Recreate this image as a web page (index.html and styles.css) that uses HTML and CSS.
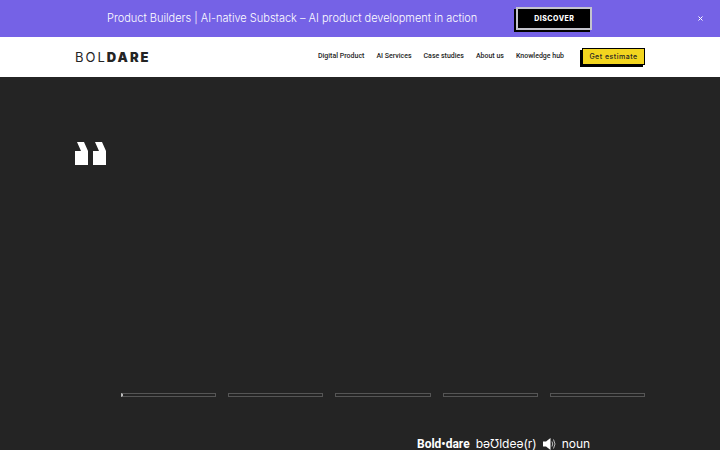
FILE: index.html
```html
<!DOCTYPE html>
<html lang="en">
<head>
<meta charset="utf-8">
<meta name="viewport" content="width=device-width, initial-scale=1">
<title>Boldare</title>
<link rel="stylesheet" href="styles.css">
</head>
<body>
<aside class="banner">
  <p class="banner-text">Product Builders | AI-native Substack – AI product development in action</p>
  <a class="discover" href="#discover">DISCOVER</a>
  <button class="close" type="button" aria-label="Close">
    <svg width="5" height="5" viewBox="0 0 5 5"><path d="M.5 .5l4 4M4.5 .5l-4 4" stroke="currentColor" stroke-width="1"/></svg>
  </button>
</aside>
<header class="header">
  <a class="logo" href="#home">BOL<b>DARE</b></a>
  <nav class="nav">
    <a href="#product">Digital Product</a>
    <a href="#ai">AI Services</a>
    <a href="#cases">Case studies</a>
    <a href="#about">About us</a>
    <a href="#knowledge">Knowledge hub</a>
  </nav>
  <a class="estimate" href="#estimate">Get estimate</a>
</header>
<main class="main">
  <section class="quotes">
    <svg class="mark" width="31" height="23" viewBox="0 0 31 23" fill="#fff" aria-hidden="true">
      <path d="M2 0h7l4 9v14H0V9h6zM20 0h7l4 9v14H18V9h6z"/>
    </svg>
    <div class="steps">
      <button class="step active" type="button" aria-label="Quote 1"></button>
      <button class="step" type="button" aria-label="Quote 2"></button>
      <button class="step" type="button" aria-label="Quote 3"></button>
      <button class="step" type="button" aria-label="Quote 4"></button>
      <button class="step" type="button" aria-label="Quote 5"></button>
    </div>
  </section>
  <section class="definition">
    <b>Bold•dare</b>
    <span>bəƱldeə(r)</span>
    <svg class="speaker" width="13" height="12" viewBox="0 0 13 12" aria-hidden="true">
      <path d="M0 3.500h3L7.500 0v12L3 8.500H0z" fill="#fff"/>
      <path d="M9 3.500q1.500 2.500 0 5M10.500 1.500q3 4.500 0 9" fill="none" stroke="#bbb"/>
    </svg>
    <span>noun</span>
  </section>
</main>
</body>
</html>
```
FILE: styles.css
```css
* { box-sizing: border-box; }

body {
  margin: 0;
  height: 100vh;
  display: flex;
  flex-direction: column;
  background: #242424;
  color: #242424;
  font-family: Inter, "Liberation Sans", sans-serif;
}

a { color: inherit; text-decoration: none; }

button { padding: 0; border: 0; background: none; color: inherit; }

.banner {
  display: flex;
  flex: none;
  align-items: center;
  padding: 7px 17px 7px 107px;
  background: #7562e6;
  color: #fff;
}

.banner-text {
  margin: 0 39px 2px 0;
  font-size: 11px;
  line-height: 18px;
  font-weight: 300;
  white-space: nowrap;
}

.discover {
  width: 76px;
  border: 2px solid #c4c4cc;
  background: #000;
  box-shadow: -2px 2px 0 #000;
  font-size: 7px;
  line-height: 19px;
  font-weight: 800;
  letter-spacing: 0.5px;
  text-align: center;
}

.close { display: flex; margin-left: auto; }

.header {
  display: flex;
  flex: none;
  align-items: center;
  height: 40px;
  padding: 0 75px;
  background: #fff;
}

.logo {
  margin-right: auto;
  font-size: 13px;
  line-height: 16px;
  font-weight: 400;
  letter-spacing: 2px;
}

.logo b { font-weight: 900; }

.nav {
  display: flex;
  gap: 12px;
  padding-bottom: 2px;
  font-family: Roboto, sans-serif;
  font-size: 7px;
  line-height: 12px;
  font-weight: 500;
  white-space: nowrap;
}

.estimate {
  width: 63px;
  margin: 0 0 2px 18px;
  border: 1px solid #000;
  background: #f2d51f;
  box-shadow: -2px 2px 0 #000;
  font-size: 7px;
  line-height: 15px;
  font-weight: 500;
  letter-spacing: 0.5px;
  text-align: center;
  white-space: nowrap;
}

.main {
  flex: 1;
  min-height: 0;
  overflow: hidden;
  color: #fff;
}

.quotes {
  display: flex;
  flex-direction: column;
  justify-content: space-between;
  min-height: 320px;
  padding: 65px 75px 0;
}

.steps {
  display: grid;
  grid-template-columns: repeat(5, 1fr);
  gap: 12px;
  margin-left: 46px;
}

.step { height: 4px; border: 1px solid #555; }

.step.active { border-left: 2px solid #bbb; }

.definition {
  display: flex;
  align-items: center;
  gap: 6px;
  padding: 38px 0 0 417px;
  font-size: 12px;
  line-height: 18px;
  white-space: nowrap;
}

.definition b { font-family: Roboto, sans-serif; }
```
